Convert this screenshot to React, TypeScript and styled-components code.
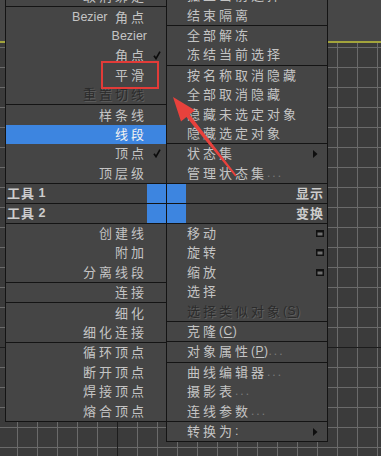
import React from 'react';
import styled, { createGlobalStyle, css } from 'styled-components';

type Item = {
  label: string;
  hotkey?: string;
  dots?: boolean;
  disabled?: boolean;
  checked?: boolean;
  active?: boolean;
  trail?: 'submenu' | 'window';
};

type Entry = Item | 'sep';
type Side = 'left' | 'right';

const toolsOne: Entry[] = [
  { label: '取消绑定' },
  'sep',
  { label: 'Bezier 角点' },
  { label: 'Bezier' },
  { label: '角点', checked: true },
  { label: '平滑' },
  { label: '重置切线', disabled: true },
  'sep',
  { label: '样条线' },
  { label: '线段', active: true },
  { label: '顶点', checked: true },
  { label: '顶层级' },
];

const display: Entry[] = [
  { label: '孤立当前选择' },
  { label: '结束隔离' },
  'sep',
  { label: '全部解冻' },
  { label: '冻结当前选择' },
  'sep',
  { label: '按名称取消隐藏' },
  { label: '全部取消隐藏' },
  { label: '隐藏未选定对象' },
  { label: '隐藏选定对象' },
  'sep',
  { label: '状态集', trail: 'submenu' },
  { label: '管理状态集', dots: true },
];

const toolsTwo: Entry[] = [
  { label: '创建线' },
  { label: '附加' },
  { label: '分离线段' },
  'sep',
  { label: '连接' },
  'sep',
  { label: '细化' },
  { label: '细化连接' },
  'sep',
  { label: '循环顶点' },
  { label: '断开顶点' },
  { label: '焊接顶点' },
  { label: '熔合顶点' },
];

const transform: Entry[] = [
  { label: '移动', trail: 'window' },
  { label: '旋转', trail: 'window' },
  { label: '缩放', trail: 'window' },
  { label: '选择' },
  { label: '选择类似对象', hotkey: 'S', disabled: true },
  'sep',
  { label: '克隆', hotkey: 'C' },
  'sep',
  { label: '对象属性', hotkey: 'P', dots: true },
  'sep',
  { label: '曲线编辑器', dots: true },
  { label: '摄影表', dots: true },
  { label: '连线参数', dots: true },
  'sep',
  { label: '转换为:', trail: 'submenu' },
];

const CJK = /([\u3000-\u9fff\uff00-\uffef]+)/;

const GlobalStyle = createGlobalStyle`
  * { box-sizing: border-box; }
  html, body {
    margin: 0;
    background: #3c3c3c;
    overflow: hidden;
  }
`;

const Viewport = styled.div`
  position: relative;
  width: 381px;
  height: 456px;
  overflow: hidden;
  display: flex;
  flex-direction: column;
  background: #3c3c3c;
`;

const ViewHeader = styled.div`
  flex: none;
  height: 43px;
  background: #474747;
  border-bottom: 2px solid #a3a43c;
`;

const GridField = styled.div`
  flex: 1;
  background-color: #3b3b3b;
  background-image: linear-gradient(#1c1c1c, #1c1c1c), linear-gradient(#1c1c1c, #1c1c1c),
    linear-gradient(to right, #6a6a6a 1px, transparent 1px),
    linear-gradient(to bottom, #6a6a6a 1px, transparent 1px);
  background-size: 1px 100%, 100% 1px, 20px 20px, 20px 20px;
  background-position: 117px 0, 0 304px, 17px 0, 0 4px;
  background-repeat: no-repeat, no-repeat, repeat, repeat;
`;

const QuadMenu = styled.div`
  position: absolute;
  left: 5px;
  top: -14px;
  width: 323px;
  font-family: 'Liberation Sans', 'Noto Sans CJK SC', sans-serif;
  color: #c4c4c4;
`;

const QuadPair = styled.div<{ $align: 'start' | 'end' }>`
  display: grid;
  grid-template-columns: 161px 162px;
  align-items: ${({ $align }) => $align};
`;

const Quad = styled.div<{ $side: Side; $bottom?: boolean }>`
  background: #454545;
  border-left: 1px solid #141414;
  ${({ $side }) => $side === 'right' && css`border-right: 1px solid #141414;`}
  ${({ $bottom }) => $bottom && css`border-bottom: 1px solid #141414;`}
`;

const Divider = styled.div`
  height: 1px;
  background: #141414;
`;

const Row = styled.div<{ $side: Side; $active?: boolean; $disabled?: boolean }>`
  height: 19.4px;
  display: grid;
  align-items: center;
  white-space: nowrap;
  ${({ $side }) =>
    $side === 'left'
      ? css`
          grid-template-columns: 1fr 19px;
          justify-items: end;
        `
      : css`
          grid-template-columns: 1fr 14px;
          padding: 0 1px 0 20px;
        `}
  ${({ $active }) =>
    $active &&
    css`
      background: #3d85e0;
      color: #f2f2f2;
    `}
  ${({ $disabled }) =>
    $disabled &&
    css`
      color: #2b2b2b;
      text-shadow: 1px 1px 0 #5f5f5f;
    `}
`;

const Label = styled.span`
  display: flex;
  align-items: center;
  line-height: 19px;
`;

const Han = styled.span<{ $bold?: boolean }>`
  font-size: 13px;
  letter-spacing: ${({ $bold }) => ($bold ? '1px' : '3px')};
  font-weight: ${({ $bold }) => ($bold ? 700 : 400)};
`;

const Latin = styled.span<{ $bold?: boolean }>`
  font-size: 12.5px;
  font-weight: ${({ $bold }) => ($bold ? 700 : 400)};
  word-spacing: ${({ $bold }) => ($bold ? '0' : '4px')};
  white-space: pre;
`;

const Hotkey = styled.span`
  font-size: 12px;
  letter-spacing: 0.5px;
  u {
    text-underline-offset: 2px;
  }
`;

const Dots = styled.span`
  font-size: 12px;
  letter-spacing: 2px;
  color: #7c7c7c;
  text-shadow: none;
`;

const Trail = styled.span<{ $kind: 'check' | 'submenu' | 'window' }>`
  display: flex;
  align-items: center;
  justify-self: ${({ $kind }) => ($kind === 'check' ? 'center' : 'start')};
  margin-left: ${({ $kind }) => ($kind === 'submenu' ? '1px' : $kind === 'window' ? '4px' : '0')};
`;

const HeaderBlock = styled.div`
  border-top: 1px solid #141414;
`;

const HeaderRow = styled.div`
  display: grid;
  grid-template-columns: 141px 19px 20px 141px;
  height: 20px;
  background: #434343;
  border-left: 1px solid #141414;
  border-right: 1px solid #141414;
  border-bottom: 1px solid #141414;
  color: #cdcdcd;
`;

const HeaderLabel = styled.div<{ $align: Side }>`
  display: flex;
  align-items: center;
  justify-content: ${({ $align }) => ($align === 'left' ? 'flex-start' : 'flex-end')};
  padding: ${({ $align }) => ($align === 'left' ? '0 0 0 1px' : '0 3px 0 0')};
  line-height: 19px;
`;

const ColorCell = styled.div<{ $split?: boolean }>`
  background: #3d85e0;
  ${({ $split }) => $split && css`border-left: 1px solid #141414;`}
`;

const Annotation = styled.div`
  position: absolute;
  left: 101px;
  top: 61px;
  width: 58px;
  height: 28px;
  border: 2px solid #e23b38;
  pointer-events: none;
`;

const ArrowLayer = styled.svg`
  position: absolute;
  left: 0;
  top: 0;
  pointer-events: none;
`;

const Words = ({ text, bold }: { text: string; bold?: boolean }) => (
  <>
    {text
      .split(CJK)
      .filter(Boolean)
      .map((part, i) =>
        CJK.test(part) ? (
          <Han key={i} $bold={bold}>
            {part}
          </Han>
        ) : (
          <Latin key={i} $bold={bold}>
            {part}
          </Latin>
        ),
      )}
  </>
);

const CheckIcon = () => (
  <svg width="8" height="9" viewBox="0 0 8 9">
    <polyline points="1,4.8 3,7.6 7,0.6" fill="none" stroke="#0c0c0c" strokeWidth="1.7" />
  </svg>
);

const SubmenuIcon = () => (
  <svg width="5" height="8" viewBox="0 0 5 8">
    <polygon points="0,0 4.5,4 0,8" fill="#0e0e0e" />
  </svg>
);

const WindowIcon = () => (
  <svg width="8" height="7" viewBox="0 0 8 7">
    <rect x="0" y="0" width="8" height="7" fill="#111" />
    <rect x="1.5" y="2.5" width="5" height="3" fill="#6e6e6e" />
  </svg>
);

const MenuList = ({ entries, side }: { entries: Entry[]; side: Side }) => (
  <>
    {entries.map((entry, i) => {
      if (entry === 'sep') return <Divider key={i} />;
      return (
        <Row key={i} $side={side} $active={entry.active} $disabled={entry.disabled}>
          <Label>
            <Words text={entry.label} />
            {entry.hotkey && (
              <Hotkey>
                (<u>{entry.hotkey}</u>)
              </Hotkey>
            )}
            {entry.dots && <Dots>...</Dots>}
          </Label>
          {entry.checked && (
            <Trail $kind="check">
              <CheckIcon />
            </Trail>
          )}
          {entry.trail === 'submenu' && (
            <Trail $kind="submenu">
              <SubmenuIcon />
            </Trail>
          )}
          {entry.trail === 'window' && (
            <Trail $kind="window">
              <WindowIcon />
            </Trail>
          )}
        </Row>
      );
    })}
  </>
);

const headers = [
  { left: '工具 1', right: '显示' },
  { left: '工具 2', right: '变换' },
];

const App = (): JSX.Element => {
  return (
    <>
      <GlobalStyle />
      <Viewport>
        <ViewHeader />
        <GridField />

        <QuadMenu>
          <QuadPair $align="end">
            <Quad $side="left">
              <MenuList entries={toolsOne} side="left" />
            </Quad>
            <Quad $side="right">
              <MenuList entries={display} side="right" />
            </Quad>
          </QuadPair>

          <HeaderBlock>
            {headers.map((h) => (
              <HeaderRow key={h.left}>
                <HeaderLabel $align="left">
                  <Words text={h.left} bold />
                </HeaderLabel>
                <ColorCell />
                <ColorCell $split />
                <HeaderLabel $align="right">
                  <Words text={h.right} bold />
                </HeaderLabel>
              </HeaderRow>
            ))}
          </HeaderBlock>

          <QuadPair $align="start">
            <Quad $side="left" $bottom>
              <MenuList entries={toolsTwo} side="left" />
            </Quad>
            <Quad $side="right" $bottom>
              <MenuList entries={transform} side="right" />
            </Quad>
          </QuadPair>
        </QuadMenu>

        <Annotation />
        <ArrowLayer width="381" height="456" viewBox="0 0 381 456">
          <polygon
            points="173,97 195,110.2 189.6,114.6 236.8,175.4 235.2,176.6 186.4,117 181,121.4"
            fill="#e8413c"
          />
        </ArrowLayer>
      </Viewport>
    </>
  );
};

export default App;
